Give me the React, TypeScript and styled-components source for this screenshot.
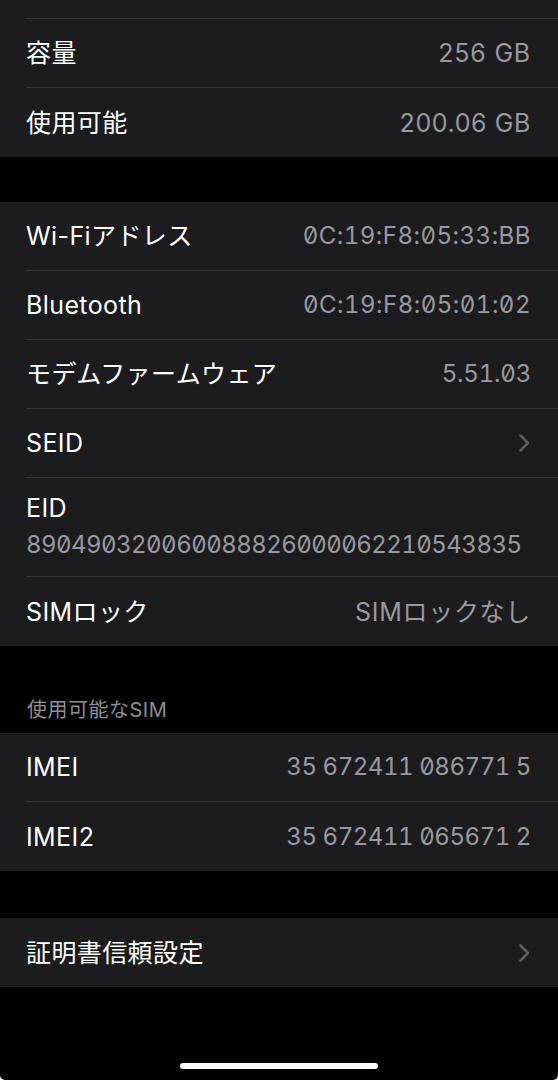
import React from "react";
import styled, { createGlobalStyle } from "styled-components";

const GlobalStyle = createGlobalStyle`
  html, body {
    margin: 0;
    padding: 0;
    background: #ffffff;
  }
  * { box-sizing: border-box; }
`;

const Screen = styled.div`
  width: 558px;
  min-height: 1080px;
  background: #000000;
  display: flex;
  flex-direction: column;
  font-family: "Inter", "Noto Sans CJK JP", sans-serif;
  -webkit-font-smoothing: antialiased;
  border-radius: 0 0 5px 5px;
  overflow: hidden;
`;

const Section = styled.div`
  background: #1c1c1e;
  display: flex;
  flex-direction: column;
`;

const Gap = styled.div<{ $h: number }>`
  height: ${(p) => p.$h}px;
`;

const Row = styled.div`
  padding-left: 26px;
`;

const RowInner = styled.div<{ $last?: boolean; $h?: number }>`
  height: ${(p) => p.$h ?? 69}px;
  display: flex;
  align-items: center;
  justify-content: space-between;
  padding-right: 27px;
  border-bottom: ${(p) => (p.$last ? "none" : "1px solid #323235")};
`;

const StackInner = styled.div<{ $last?: boolean }>`
  display: flex;
  flex-direction: column;
  padding: 15px 27px 16px 0;
  border-bottom: ${(p) => (p.$last ? "none" : "1px solid #323235")};
`;

const Label = styled.span`
  color: #ffffff;
  font-size: 25px;
  line-height: 30px;
  letter-spacing: 0.4px;
  white-space: nowrap;
`;

const Value = styled.span<{ $zero?: boolean; $track?: number }>`
  color: #98989e;
  font-size: ${(p) => (p.$zero ? 24 : 25)}px;
  line-height: 30px;
  letter-spacing: ${(p) => p.$track ?? 0.5}px;
  white-space: nowrap;
  font-feature-settings: ${(p) => (p.$zero ? '"tnum" 1, "zero" 1' : '"tnum" 0')};
`;

const StackValue = styled(Value)`
  margin-top: 7px;
`;

const SectionHeader = styled.div`
  padding: 52px 27px 11px 27px;
  color: #8d8d93;
  font-size: 20px;
  line-height: 24px;
  letter-spacing: 0.5px;
`;

const Chevron = () => (
  <svg width="13" height="20" viewBox="0 0 13 20" fill="none">
    <path
      d="M2.5 2.5 L10 10 L2.5 17.5"
      stroke="#5c5c61"
      strokeWidth="2.6"
      strokeLinecap="round"
      strokeLinejoin="round"
    />
  </svg>
);

const HomeArea = styled.div`
  margin-top: auto;
  display: flex;
  justify-content: center;
  padding-bottom: 11px;
`;

const HomeBar = styled.div`
  width: 198px;
  height: 6px;
  border-radius: 3px;
  background: #ffffff;
`;

type Item = {
  label: string;
  value?: string;
  zero?: boolean;
  track?: number;
  chevron?: boolean;
  stacked?: boolean;
};

const List = ({ items }: { items: Item[] }) => (
  <>
    {items.map((it, i) => {
      const last = i === items.length - 1;
      return (
        <Row key={it.label}>
          {it.stacked ? (
            <StackInner $last={last}>
              <Label>{it.label}</Label>
              <StackValue $zero={it.zero} $track={it.track}>
                {it.value}
              </StackValue>
            </StackInner>
          ) : (
            <RowInner $last={last}>
              <Label>{it.label}</Label>
              {it.chevron ? (
                <Chevron />
              ) : (
                <Value $zero={it.zero} $track={it.track}>
                  {it.value}
                </Value>
              )}
            </RowInner>
          )}
        </Row>
      );
    })}
  </>
);

export default function App() {
  return (
    <>
      <GlobalStyle />
      <Screen>
        <Section>
          <Row>
            <RowInner $h={19} />
          </Row>
          <List
            items={[
              { label: "容量", value: "256 GB", track: 0.8 },
              { label: "使用可能", value: "200.06 GB", track: 0.6 },
            ]}
          />
        </Section>
        <Gap $h={45} />
        <Section>
          <List
            items={[
              { label: "Wi-Fiアドレス", value: "0C:19:F8:05:33:BB", zero: true, track: 0.5 },
              { label: "Bluetooth", value: "0C:19:F8:05:01:02", zero: true, track: 0.5 },
              { label: "モデムファームウェア", value: "5.51.03", zero: true, track: -0.2 },
              { label: "SEID", chevron: true },
              {
                label: "EID",
                value: "890490320060088826000062210543835",
                zero: true,
                track: -0.55,
                stacked: true,
              },
              { label: "SIMロック", value: "SIMロックなし", track: 0.7 },
            ]}
          />
        </Section>
        <SectionHeader>使用可能なSIM</SectionHeader>
        <Section>
          <List
            items={[
              { label: "IMEI", value: "35 672411 086771 5", zero: true, track: -0.45 },
              { label: "IMEI2", value: "35 672411 065671 2", zero: true, track: -0.45 },
            ]}
          />
        </Section>
        <Gap $h={47} />
        <Section>
          <List items={[{ label: "証明書信頼設定", chevron: true }]} />
        </Section>
        <HomeArea>
          <HomeBar />
        </HomeArea>
      </Screen>
    </>
  );
}
